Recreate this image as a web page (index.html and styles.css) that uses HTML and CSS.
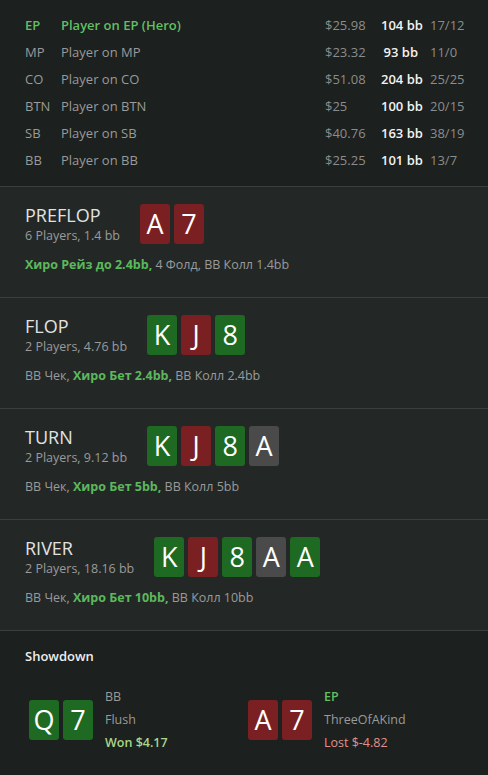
FILE: index.html
```html
<!DOCTYPE html>
<html lang="ru">
<head>
  <meta charset="UTF-8">
  <meta name="viewport" content="width=device-width, initial-scale=1.0">
  <title>Hand replay</title>
  <link rel="stylesheet" href="styles.css">
</head>
<body>

<div class="players">
  <div class="player hero">
    <span class="pos">EP</span><span class="name">Player on EP (Hero)</span>
    <span class="money">$25.98</span><span class="bb">104 bb</span><span class="stats">17/12</span>
  </div>
  <div class="player">
    <span class="pos">MP</span><span class="name">Player on MP</span>
    <span class="money">$23.32</span><span class="bb">93 bb</span><span class="stats">11/0</span>
  </div>
  <div class="player">
    <span class="pos">CO</span><span class="name">Player on CO</span>
    <span class="money">$51.08</span><span class="bb">204 bb</span><span class="stats">25/25</span>
  </div>
  <div class="player">
    <span class="pos">BTN</span><span class="name">Player on BTN</span>
    <span class="money">$25</span><span class="bb">100 bb</span><span class="stats">20/15</span>
  </div>
  <div class="player">
    <span class="pos">SB</span><span class="name">Player on SB</span>
    <span class="money">$40.76</span><span class="bb">163 bb</span><span class="stats">38/19</span>
  </div>
  <div class="player">
    <span class="pos">BB</span><span class="name">Player on BB</span>
    <span class="money">$25.25</span><span class="bb">101 bb</span><span class="stats">13/7</span>
  </div>
</div>

<div class="street">
  <div class="street-head">
    <div class="street-info">
      <div class="street-name">PREFLOP</div>
      <div class="street-pot">6 Players, 1.4 bb</div>
    </div>
    <div class="cards">
      <span class="card red">A</span><span class="card red">7</span>
    </div>
  </div>
  <div class="actions"><b>Хиро Рейз до 2.4bb,</b> 4 Фолд, BB Колл 1.4bb</div>
</div>

<div class="street">
  <div class="street-head">
    <div class="street-info">
      <div class="street-name">FLOP</div>
      <div class="street-pot">2 Players, 4.76 bb</div>
    </div>
    <div class="cards">
      <span class="card green">K</span><span class="card red">J</span><span class="card green">8</span>
    </div>
  </div>
  <div class="actions">BB Чек, <b>Хиро Бет 2.4bb,</b> BB Колл 2.4bb</div>
</div>

<div class="street">
  <div class="street-head">
    <div class="street-info">
      <div class="street-name">TURN</div>
      <div class="street-pot">2 Players, 9.12 bb</div>
    </div>
    <div class="cards">
      <span class="card green">K</span><span class="card red">J</span><span class="card green">8</span><span class="card grey">A</span>
    </div>
  </div>
  <div class="actions">BB Чек, <b>Хиро Бет 5bb,</b> BB Колл 5bb</div>
</div>

<div class="street">
  <div class="street-head">
    <div class="street-info">
      <div class="street-name">RIVER</div>
      <div class="street-pot">2 Players, 18.16 bb</div>
    </div>
    <div class="cards">
      <span class="card green">K</span><span class="card red">J</span><span class="card green">8</span><span class="card grey">A</span><span class="card green">A</span>
    </div>
  </div>
  <div class="actions">BB Чек, <b>Хиро Бет 10bb,</b> BB Колл 10bb</div>
</div>

<div class="showdown">
  <div class="showdown-title">Showdown</div>
  <div class="hands">
    <div class="hand">
      <div class="cards">
        <span class="card green">Q</span><span class="card green">7</span>
      </div>
      <div class="hand-info">
        <div>BB</div>
        <div>Flush</div>
        <div class="won">Won $4.17</div>
      </div>
    </div>
    <div class="hand">
      <div class="cards">
        <span class="card red">A</span><span class="card red">7</span>
      </div>
      <div class="hand-info">
        <div class="hero-pos">EP</div>
        <div>ThreeOfAKind</div>
        <div class="lost">Lost $-4.82</div>
      </div>
    </div>
  </div>
</div>

</body>
</html>
```

FILE: styles.css
```css
body {
  margin: 0;
  font-family: 'Open Sans', 'Noto Sans', sans-serif;
  background-color: #1c201e;
  color: #9a9a9a;
  font-size: 13px;
}

/* players table */
.players {
  padding: 11px 0 13px 25px;
  border-bottom: 1px solid #3a3f3d;
}

.player {
  display: grid;
  grid-template-columns: 36px 1fr 56px 37px 70px;
  height: 27px;
  align-items: center;
  white-space: nowrap;
}

.player .money {
  color: #8c8c8c;
}

.player .bb {
  color: #f2f2f2;
  font-weight: 600;
  text-align: right;
}

.player .stats {
  color: #8c8c8c;
  padding-left: 12px;
}

.player.hero .pos,
.player.hero .name {
  color: #62bf62;
  font-weight: 600;
}

/* streets */
.street {
  background-color: #232827;
  padding: 16px 25px 24px;
  border-bottom: 1px solid #3a3f3d;
  height: 70px;
  font-size: 12.5px;
}

.street-head {
  display: flex;
  align-items: center;
  gap: 20px;
}

.street-name {
  color: #e2e2e2;
  font-size: 18px;
  line-height: 24px;
}

.street-pot {
  line-height: 17px;
}

.actions {
  margin-top: 12px;
  line-height: 18px;
}

.actions b {
  color: #5cb85c;
  font-weight: 700;
}

/* cards */
.cards {
  display: flex;
  gap: 4px;
}

.card {
  width: 30px;
  height: 40px;
  border-radius: 3px;
  color: #fff;
  font-size: 27px;
  line-height: 40px;
  text-align: center;
}

.card.red {
  background-color: #7a2022;
}

.card.green {
  background-color: #1e6a22;
}

.card.grey {
  background-color: #4a4a4a;
}

/* showdown */
.showdown {
  padding: 16px 25px 30px;
}

.showdown-title {
  color: #eeeeee;
  font-weight: 600;
  line-height: 18px;
}

.hands {
  display: grid;
  grid-template-columns: 1fr 1fr;
  margin-top: 20px;
}

.hand {
  display: flex;
  align-items: center;
  gap: 12px;
  padding-left: 4px;
}

.hand-info {
  line-height: 23px;
  font-size: 12.5px;
}

.hand-info .won {
  color: #a8d68a;
  font-weight: 600;
}

.hand-info .lost {
  color: #e0908a;
}

.hand-info .hero-pos {
  color: #62bf62;
  font-weight: 600;
}
```
